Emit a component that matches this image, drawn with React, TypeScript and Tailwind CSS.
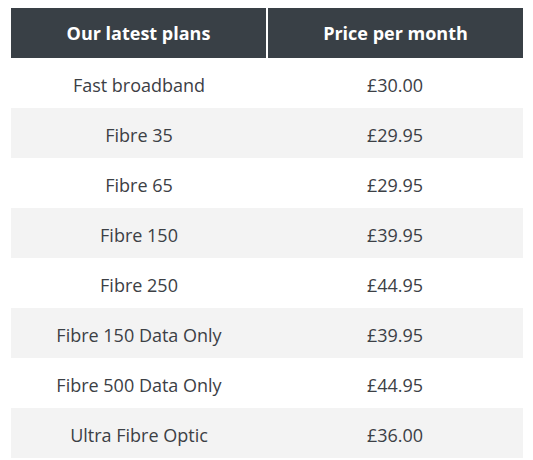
const plans = [
  { name: "Fast broadband", price: "£30.00" },
  { name: "Fibre 35", price: "£29.95" },
  { name: "Fibre 65", price: "£29.95" },
  { name: "Fibre 150", price: "£39.95" },
  { name: "Fibre 250", price: "£44.95" },
  { name: "Fibre 150 Data Only", price: "£39.95" },
  { name: "Fibre 500 Data Only", price: "£44.95" },
  { name: "Ultra Fibre Optic", price: "£36.00" },
];

export default function App() {
  return (
    <div className="bg-white pt-[8px] pl-[11px] font-['Open_Sans',sans-serif]">
      <table className="w-[512px] border-collapse table-fixed">
        <thead>
          <tr className="bg-[#394046] text-white text-[18px] font-bold h-[50px]">
            <th className="w-[256px] border-r-2 border-white">Our latest plans</th>
            <th>Price per month</th>
          </tr>
        </thead>
        <tbody>
          {plans.map((p, i) => (
            <tr
              key={p.name}
              className={`h-[50px] text-[18px] text-[#3c4045] ${i % 2 === 1 ? "bg-[#f3f3f3]" : "bg-white"}`}
            >
              <td className="text-center pt-[4px]">{p.name}</td>
              <td className="text-center pt-[4px]">{p.price}</td>
            </tr>
          ))}
        </tbody>
      </table>
    </div>
  );
}
